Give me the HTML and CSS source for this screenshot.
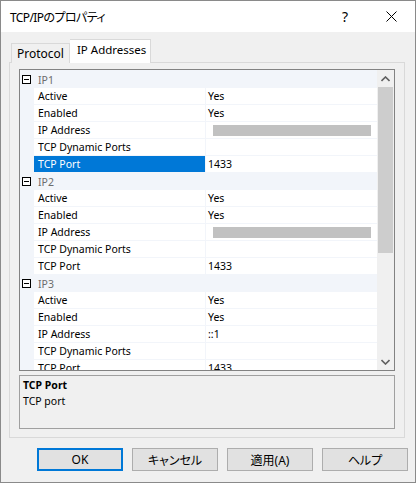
FILE: index.html
```html
<!DOCTYPE html>
<html lang="ja">
<head>
<meta charset="utf-8">
<title>TCP/IPのプロパティ</title>
<link rel="stylesheet" href="styles.css">
</head>
<body>
<div class="window">
  <div class="titlebar">
    <span class="title">TCP/IPのプロパティ</span>
    <span class="help-btn">?</span>
    <span class="close-btn">
      <svg width="11" height="11" viewBox="0 0 11 11"><path d="M0.5 0.5L10.5 10.5M10.5 0.5L0.5 10.5" stroke="#000" stroke-width="1" fill="none"/></svg>
    </span>
  </div>
  <div class="body">
    <div class="tabs">
      <div class="tab">Protocol</div>
      <div class="tab selected">IP Addresses</div>
    </div>
    <div class="panel">
      <div class="grid">
        <div class="list">
          <div class="cat"><span class="box"></span><span class="cat-name">IP1</span></div>
          <div class="row"><span class="name">Active</span><span class="val">Yes</span></div>
          <div class="row"><span class="name">Enabled</span><span class="val">Yes</span></div>
          <div class="row"><span class="name">IP Address</span><span class="val"><span class="mask"></span></span></div>
          <div class="row"><span class="name">TCP Dynamic Ports</span><span class="val"></span></div>
          <div class="row sel"><span class="name">TCP Port</span><span class="val">1433</span></div>
          <div class="cat"><span class="box"></span><span class="cat-name">IP2</span></div>
          <div class="row"><span class="name">Active</span><span class="val">Yes</span></div>
          <div class="row"><span class="name">Enabled</span><span class="val">Yes</span></div>
          <div class="row"><span class="name">IP Address</span><span class="val"><span class="mask"></span></span></div>
          <div class="row"><span class="name">TCP Dynamic Ports</span><span class="val"></span></div>
          <div class="row"><span class="name">TCP Port</span><span class="val">1433</span></div>
          <div class="cat"><span class="box"></span><span class="cat-name">IP3</span></div>
          <div class="row"><span class="name">Active</span><span class="val">Yes</span></div>
          <div class="row"><span class="name">Enabled</span><span class="val">Yes</span></div>
          <div class="row"><span class="name">IP Address</span><span class="val">::1</span></div>
          <div class="row"><span class="name">TCP Dynamic Ports</span><span class="val"></span></div>
          <div class="row"><span class="name">TCP Port</span><span class="val">1433</span></div>
        </div>
        <div class="scrollbar">
          <div class="arrow">
            <svg width="9" height="6" viewBox="0 0 9 6"><path d="M0.5 5L4.5 1L8.5 5" stroke="#606060" stroke-width="1.6" fill="none"/></svg>
          </div>
          <div class="track"><div class="thumb"></div></div>
          <div class="arrow">
            <svg width="9" height="6" viewBox="0 0 9 6"><path d="M0.5 1L4.5 5L8.5 1" stroke="#606060" stroke-width="1.6" fill="none"/></svg>
          </div>
        </div>
      </div>
      <div class="desc">
        <div class="desc-title">TCP Port</div>
        <div class="desc-text">TCP port</div>
      </div>
    </div>
    <div class="buttons">
      <button class="btn default">OK</button>
      <button class="btn">キャンセル</button>
      <button class="btn">適用(A)</button>
      <button class="btn">ヘルプ</button>
    </div>
  </div>
</div>
</body>
</html>
```
FILE: styles.css
```css
* { box-sizing: border-box; }
html, body { margin: 0; padding: 0; background: #fff; }
body {
  font-family: "Noto Sans", "Noto Sans CJK JP", sans-serif;
  font-size: 12px;
  color: #000;
  font-feature-settings: "palt";
}
.window {
  width: 416px;
  height: 483px;
  border: 1px solid #8a8a8a;
  background: #f0f0f0;
  display: flex;
  flex-direction: column;
}
.titlebar {
  height: 31px;
  background: #fff;
  display: flex;
  align-items: center;
  padding-left: 9px;
}
.title {
  flex: 1;
  font-size: 12px;
  letter-spacing: -0.6px;
}
.help-btn {
  width: 46px;
  text-align: center;
  font-size: 14px;
}
.close-btn {
  width: 46px;
  display: flex;
  justify-content: center;
  align-items: center;
  margin-right: 1px;
}
.body {
  flex: 1;
  padding: 8px 10px 0 8px;
  display: flex;
  flex-direction: column;
}
.tabs {
  display: flex;
  align-items: flex-end;
  padding-left: 2px;
  height: 23px;
  position: relative;
  z-index: 1;
  margin-bottom: -1px;
}
.tab {
  height: 20px;
  border: 1px solid #d9d9d9;
  border-bottom: none;
  background: #f0f0f0;
  padding: 0 5px;
  line-height: 19px;
  font-size: 12px;
  white-space: nowrap;
}
.tab.selected {
  height: 24px;
  background: #fff;
  border-left: none;
  padding: 0 0 0 7px;
  line-height: 20px;
  width: 81px;
  font-size: 11.5px;
}
.panel {
  height: 376px;
  border: 1px solid #d9d9d9;
  background: #f0f0f0;
  padding: 6px 9px 8px 9px;
  display: flex;
  flex-direction: column;
  gap: 4px;
}
.grid {
  height: 302px;
  border: 1px solid #828282;
  display: flex;
  background: #fff;
  font-size: 10.5px;
}
.list {
  flex: 1;
  overflow: hidden;
  background: #f2f5fa;
}
.cat {
  height: 17px;
  display: flex;
  align-items: center;
  padding-top: 2px;
}
.box {
  width: 9px;
  height: 9px;
  border: 1px solid #000;
  margin-left: 2px;
  margin-right: 7px;
  position: relative;
  background: #fff;
}
.box::after {
  content: "";
  position: absolute;
  left: 1px;
  top: 3px;
  width: 5px;
  height: 1px;
  background: #000;
}
.cat-name {
  color: #6d6d6d;
}
.row {
  height: 17px;
  display: flex;
  padding-left: 14px;
  border-top: 1px solid #f2f5fa;
}
.name {
  width: 171px;
  background: #fff;
  padding-left: 4px;
  line-height: 17px;
  white-space: nowrap;
}
.val {
  flex: 1;
  margin-left: 1px;
  background: #fff;
  padding-left: 2px;
  line-height: 17px;
  display: flex;
  align-items: center;
}
.row.sel .name {
  background: #0078d7;
  color: #fff;
}
.mask {
  display: block;
  width: 158px;
  height: 11px;
  margin-left: 5px;
  background: #c1c1c1;
}
.scrollbar {
  width: 17px;
  background: #f0f0f0;
  display: flex;
  flex-direction: column;
}
.arrow {
  height: 17px;
  display: flex;
  align-items: center;
  justify-content: center;
}
.track {
  flex: 1;
  padding: 0 1px;
}
.thumb {
  height: 166px;
  background: #cdcdcd;
}
.desc {
  height: 55px;
  border: 1px solid #a0a0a0;
  padding: 1px 0 0 3px;
  line-height: 16px;
  font-size: 10.5px;
}
.desc-title { font-weight: bold; }
.buttons {
  display: flex;
  justify-content: flex-end;
  gap: 9px;
  padding-top: 10px;
  margin-right: -3px;
}
.btn {
  width: 86px;
  height: 23px;
  border: 1px solid #adadad;
  background: #e1e1e1;
  font-family: "Noto Sans", "Noto Sans CJK JP", sans-serif;
  font-feature-settings: "palt";
  font-size: 12px;
  padding: 0;
  color: #000;
}
.btn.default {
  border: 2px solid #0078d7;
}
```
